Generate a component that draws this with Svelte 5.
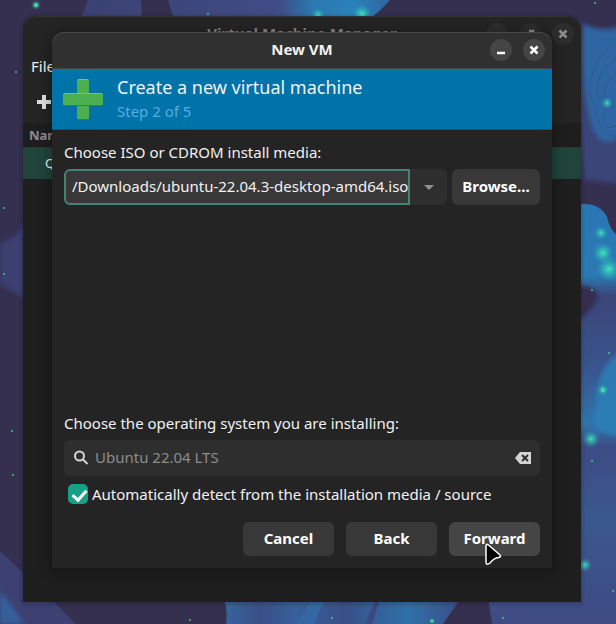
<script>
  let media = $state('/Downloads/ubuntu-22.04.3-desktop-amd64.iso');
  let os = $state('Ubuntu 22.04 LTS');
  let detect = $state(true);

  const stars = [
    [36, 5, 2], [36, 18, 1], [208, 14, 1], [595, 3, 1], [16, 72, 1], [4, 208, 1],
    [4, 274, 1], [12, 431, 1], [13, 475, 1], [592, 290, 1], [609, 353, 1],
    [603, 390, 2], [592, 461, 1], [613, 591, 1], [190, 620, 1], [332, 618, 1],
    [432, 621, 2], [503, 618, 1]
  ];
  const glows = [
    [318, 15, 7], [362, 14, 10], [607, 103, 6], [601, 233, 7], [603, 253, 11],
    [609, 269, 13], [603, 390, 6], [591, 439, 9], [585, 565, 7], [36, 5, 5]
  ];
</script>

<main class="desktop">
  <svg class="wallpaper" viewBox="0 0 616 624" preserveAspectRatio="xMidYMid slice" aria-hidden="true">
    <defs>
      <radialGradient id="glow">
        <stop offset="0" stop-color="#46ffc0" />
        <stop offset="0.35" stop-color="#35e0b8" stop-opacity="0.7" />
        <stop offset="1" stop-color="#2a9fc0" stop-opacity="0" />
      </radialGradient>
      <linearGradient id="top" x1="80" x2="390" y1="0" y2="0" gradientUnits="userSpaceOnUse">
        <stop offset="0" stop-color="#3b4172" />
        <stop offset="0.64" stop-color="#3f4c85" />
        <stop offset="0.75" stop-color="#2b78b0" />
        <stop offset="0.88" stop-color="#2a82bc" />
        <stop offset="1" stop-color="#2f65a0" />
      </linearGradient>
      <linearGradient id="mid" x1="0" x2="0" y1="204" y2="624" gradientUnits="userSpaceOnUse">
        <stop offset="0" stop-color="#2a76b3" />
        <stop offset="0.17" stop-color="#2a7ab4" />
        <stop offset="0.22" stop-color="#3c4578" />
        <stop offset="0.4" stop-color="#38568f" />
        <stop offset="0.52" stop-color="#2f76ab" />
        <stop offset="0.58" stop-color="#3d4c84" />
        <stop offset="0.75" stop-color="#3a588f" />
        <stop offset="1" stop-color="#3f4a82" />
      </linearGradient>
      <linearGradient id="foot" x1="225" x2="460" y1="0" y2="0" gradientUnits="userSpaceOnUse">
        <stop offset="0" stop-color="#36649c" />
        <stop offset="0.15" stop-color="#3b4f87" />
        <stop offset="0.3" stop-color="#36609c" />
        <stop offset="0.5" stop-color="#3a4f88" />
        <stop offset="0.78" stop-color="#2f70a8" />
        <stop offset="1" stop-color="#3a4f88" />
      </linearGradient>
      <filter id="soft"><feGaussianBlur stdDeviation="2" /></filter>
    </defs>
    <rect width="616" height="624" fill="#352f50" />
    <path d="M88 0H390Q376 16 352 32H76Z" fill="url(#top)" />
    <path d="M141 0H168L174 20H142Z" fill="#352f50" />
    <path d="M576 21Q596 34 616 26H622V184Q600 182 584 180Q578 130 576 21Z" fill="#3a4477" filter="url(#soft)" />
    <path d="M584 24Q600 34 622 28V134Q602 154 592 126Q580 88 584 24Z" fill="#2f66a3" filter="url(#soft)" />
    <g fill="none" stroke="#31598f" stroke-width="1">
      <path d="M616 42Q598 52 590 82Q588 94 595 106Q598 138 616 135" />
      <path d="M616 58Q594 74 597 95Q610 100 603 121Q606 131 616 126" />
      <path d="M616 74Q600 86 606 99" />
    </g>
    <path d="M576 204Q600 202 607 217Q610 230 616 234V624H480V590H576Z" fill="url(#mid)" />
    <path d="M576 288Q592 282 598 296Q594 312 576 320Z" fill="#352f50" filter="url(#soft)" />
    <path d="M597 388Q603 360 622 352V438L594 430Z" fill="#2c82b9" filter="url(#soft)" opacity="0.8" />
    <path d="M0 243Q20 236 24 222V298L0 284Z" fill="#3a4171" filter="url(#soft)" />
    <path d="M0 551L54 602L76 624H0Z" fill="#3c4172" />
    <path d="M0 591Q14 608 24 624H0Z" fill="#355f9b" filter="url(#soft)" />
    <path d="M224 598H462L444 624H226Q228 612 224 598Z" fill="url(#foot)" />
    <path d="M310 602H324Q317 614 315 624H296Z" fill="#3568a3" />
    <path d="M374 602H379L372 624H366Z" fill="#3b4780" />
    <path d="M461 598H488L492 624H443Z" fill="#352f50" />
    {#each glows as [x, y, r]}
      <circle cx={x} cy={y} {r} fill="url(#glow)" opacity="0.8" />
    {/each}
    {#each stars as [x, y, r]}
      <circle cx={x} cy={y} {r} fill="#46e890" opacity="0.8" />
    {/each}
  </svg>

  <section class="manager" aria-label="Virtual Machine Manager">
    <header class="manager-head">
      <span class="manager-title">Virtual Machine Manager</span>
      <div class="controls">
        <button class="round" type="button" aria-label="Minimize">
          <svg viewBox="0 0 22 22"><path d="M7 14H15" /></svg>
        </button>
        <button class="round" type="button" aria-label="Maximize">
          <svg viewBox="0 0 22 22"><path d="M10 8H14V12M12 14H8V10" /></svg>
        </button>
        <button class="round" type="button" aria-label="Close">
          <svg viewBox="0 0 22 22"><path d="M7.500 7.500L14.500 14.500M14.500 7.500L7.500 14.500" /></svg>
        </button>
      </div>
    </header>
    <nav class="menu"><button type="button">File</button></nav>
    <div class="tools">
      <button type="button" aria-label="Create virtual machine">
        <svg viewBox="0 0 14 14"><path d="M7 0V14M0 7H14" /></svg>
      </button>
    </div>
    <table>
      <thead><tr><th>Name</th></tr></thead>
      <tbody><tr><td>QEMU</td></tr></tbody>
    </table>
  </section>

  <form class="dialog" aria-label="New VM" onsubmit={(e) => e.preventDefault()}>
    <header class="dialog-head">
      <h1>New VM</h1>
      <div class="controls">
        <button class="round" type="button" aria-label="Minimize">
          <svg viewBox="0 0 22 22"><path d="M7 14H15" /></svg>
        </button>
        <button class="round" type="button" aria-label="Close">
          <svg viewBox="0 0 22 22"><path d="M7.500 7.500L14.500 14.500M14.500 7.500L7.500 14.500" /></svg>
        </button>
      </div>
    </header>

    <div class="banner">
      <svg viewBox="0 0 40 41" aria-hidden="true">
        <rect x="14" y="1" width="12" height="40" rx="2" fill="#37813c" />
        <rect x="14" y="0" width="12" height="40" rx="2" fill="#73c477" />
        <rect x="14" y="1" width="12" height="39" rx="2" fill="#4caf50" />
        <rect x="0" y="15" width="40" height="12" rx="2" fill="#37813c" />
        <rect x="0" y="14" width="40" height="12" rx="2" fill="#73c477" />
        <rect x="0" y="15" width="40" height="11" rx="2" fill="#4caf50" />
      </svg>
      <div class="heading">
        <h2>Create a new virtual machine</h2>
        <p>Step 2 of 5</p>
      </div>
    </div>

    <div class="body">
      <label for="media">Choose ISO or CDROM install media:</label>
      <div class="media-row">
        <div class="combo">
          <input id="media" type="text" bind:value={media} />
          <button type="button" aria-label="Show recent media">
            <svg viewBox="0 0 10 5"><path d="M0 0H10L5 5Z" /></svg>
          </button>
        </div>
        <button class="btn browse" type="button">Browse...</button>
      </div>

      <label class="os-label" for="os">Choose the operating system you are installing:</label>
      <div class="search">
        <svg class="lens" viewBox="0 0 16 16" aria-hidden="true">
          <circle cx="6.500" cy="6" r="4.500" /><path d="M10 9.500L14.500 14" />
        </svg>
        <input id="os" type="text" bind:value={os} />
        <button type="button" aria-label="Clear" onclick={() => (os = '')}>
          <svg viewBox="0 0 16 12">
            <path d="M5 0H16V12H5L0 6Z" fill="#d4d4d4" />
            <path d="M7 3L13 9M13 3L7 9" stroke="#2e2e2e" stroke-width="2" />
          </svg>
        </button>
      </div>

      <label class="check">
        <input type="checkbox" bind:checked={detect} />
        Automatically detect from the installation media / source
      </label>

      <footer>
        <button class="btn" type="button">Cancel</button>
        <button class="btn" type="button">Back</button>
        <button class="btn hot" type="submit">Forward</button>
      </footer>
    </div>
  </form>

  <svg class="pointer" viewBox="0 0 18 23" aria-hidden="true">
    <path d="M2 3.500Q2 0 4.500 2L15.500 11.500Q18 14 14.500 14.500Q10 15 6 20Q2 23 2 19Z" />
  </svg>
</main>

<style>
  :global(body) {
    margin: 0;
    background: #352f50;
  }

  .desktop {
    position: relative;
    min-height: 100vh;
    overflow: hidden;
    font-family: 'Noto Sans', 'Open Sans', sans-serif;
    font-size: 15px;
    line-height: 20px;
    color: #f2f2f2;
  }

  .desktop * {
    box-sizing: border-box;
  }

  svg {
    display: block;
  }

  button,
  input {
    margin: 0;
    padding: 0;
    border: 0;
    background: none;
    font: inherit;
    color: inherit;
    outline: none;
  }

  .wallpaper {
    position: absolute;
    width: 100%;
    height: 100%;
  }

  .manager,
  .dialog {
    position: absolute;
    display: flex;
    flex-direction: column;
  }

  .manager {
    inset: 16px 35px 22px 23px;
    overflow: hidden;
    border-radius: 14px 14px 0 0;
    background: #1e1e1e;
    box-shadow: 0 1px 3px 2px #00000026;
  }

  .manager-head,
  .dialog-head {
    position: relative;
    display: flex;
    align-items: center;
    justify-content: center;
    height: 36px;
    padding-bottom: 2px;
    font-weight: 700;
  }

  .manager-head {
    border-radius: 14px 14px 0 0;
    color: #858585;
    background: #242424;
    box-shadow: inset 0 1px #343434;
  }

  .controls {
    position: absolute;
    top: 7px;
    right: 7px;
    display: flex;
    gap: 11px;
  }

  .round {
    width: 22px;
    height: 22px;
    border-radius: 50%;
    background: #454545;
  }

  .round path {
    fill: none;
    stroke: #fff;
    stroke-width: 2.5;
  }

  .manager .round {
    background: #2d2d2d;
  }

  .manager .round path {
    stroke: #8c8c8c;
  }

  .menu,
  .tools {
    display: flex;
    align-items: flex-start;
    background: #242424;
  }

  .menu {
    padding: 4px 8px 6px;
  }

  .tools {
    padding: 13px 14px;
    height: 41px;
  }

  .tools svg {
    width: 14px;
  }

  .tools path {
    stroke: #dedede;
    stroke-width: 4;
  }

  table {
    border-collapse: collapse;
    text-align: left;
    font-size: 13px;
  }

  th {
    height: 24px;
    padding: 0 6px;
    color: #8c8c8c;
    border-bottom: 1px solid #343434;
  }

  td {
    height: 32px;
    padding: 0 22px;
    background: #20443c;
  }

  .dialog {
    inset: 32px 64px 56px 52px;
    border-radius: 12px 12px 0 0;
    background: #242424;
    box-shadow: 0 2px 12px 2px #0000004d;
  }

  .dialog-head {
    flex: none;
    height: 37px;
    border-radius: 12px 12px 0 0;
    background: #303030;
    border-bottom: 1px solid #454545;
    box-shadow: inset 0 1px #484848;
  }

  h1,
  h2,
  p {
    margin: 0;
    font-size: inherit;
  }

  .banner {
    display: flex;
    align-items: center;
    gap: 14px;
    height: 61px;
    padding: 0 11px;
    background: #0073a8;
    border-bottom: 1px solid #454545;
  }

  .banner svg {
    width: 40px;
  }

  .heading {
    padding-bottom: 2px;
  }

  h2 {
    font-size: 18px;
    font-weight: 400;
    line-height: 26px;
  }

  p {
    color: #58ace0;
    line-height: 22px;
  }

  .body {
    display: flex;
    flex: 1;
    flex-direction: column;
    padding: 12px;
  }

  .media-row {
    display: flex;
    gap: 5px;
    height: 36px;
    margin-top: 7px;
  }

  .combo {
    display: flex;
    flex: 1;
    min-width: 0;
  }

  .combo input {
    flex: 1;
    min-width: 0;
    padding: 0 0 2px 6px;
    border: 2px solid #458373;
    border-radius: 6px 0 0 6px;
    background: #383838;
  }

  .combo button {
    display: flex;
    align-items: center;
    justify-content: center;
    width: 37px;
    border-radius: 0 6px 6px 0;
    background: #2e2e2e;
  }

  .combo svg {
    width: 10px;
    fill: #919191;
  }

  .btn {
    width: 91px;
    height: 34px;
    padding-bottom: 2px;
    border-radius: 6px;
    background: #383838;
    color: #fff;
    font-weight: 700;
  }

  .browse {
    width: 88px;
    height: 36px;
  }

  .hot {
    background: #454545;
  }

  .os-label {
    margin-top: auto;
  }

  .search {
    display: flex;
    align-items: center;
    gap: 6px;
    height: 36px;
    margin-top: 7px;
    padding: 0 9px;
    border-radius: 6px;
    background: #2e2e2e;
    color: #8c8c8c;
  }

  .search input {
    flex: 1;
    min-width: 0;
    padding-bottom: 2px;
  }

  .search svg {
    width: 16px;
  }

  .lens {
    fill: none;
    stroke: #d4d4d4;
    stroke-width: 2;
  }

  .check {
    display: flex;
    align-items: center;
    gap: 4px;
    margin: 8px 4px 18px;
  }

  .check input {
    appearance: none;
    flex: none;
    width: 20px;
    height: 20px;
    border-radius: 5px;
    background: #383838;
  }

  .check input:checked {
    background: #16a085;
  }

  .check input:checked::after {
    content: '';
    display: block;
    width: 6px;
    height: 11px;
    margin: 3px 7px;
    border: solid #fff;
    border-width: 0 3px 3px 0;
    transform: rotate(42deg);
  }

  footer {
    display: flex;
    justify-content: flex-end;
    gap: 12px;
  }

  .pointer {
    position: absolute;
    right: 114px;
    bottom: 58px;
    width: 18px;
    fill: #000;
    stroke: #fff;
    stroke-width: 1.5;
  }
</style>
